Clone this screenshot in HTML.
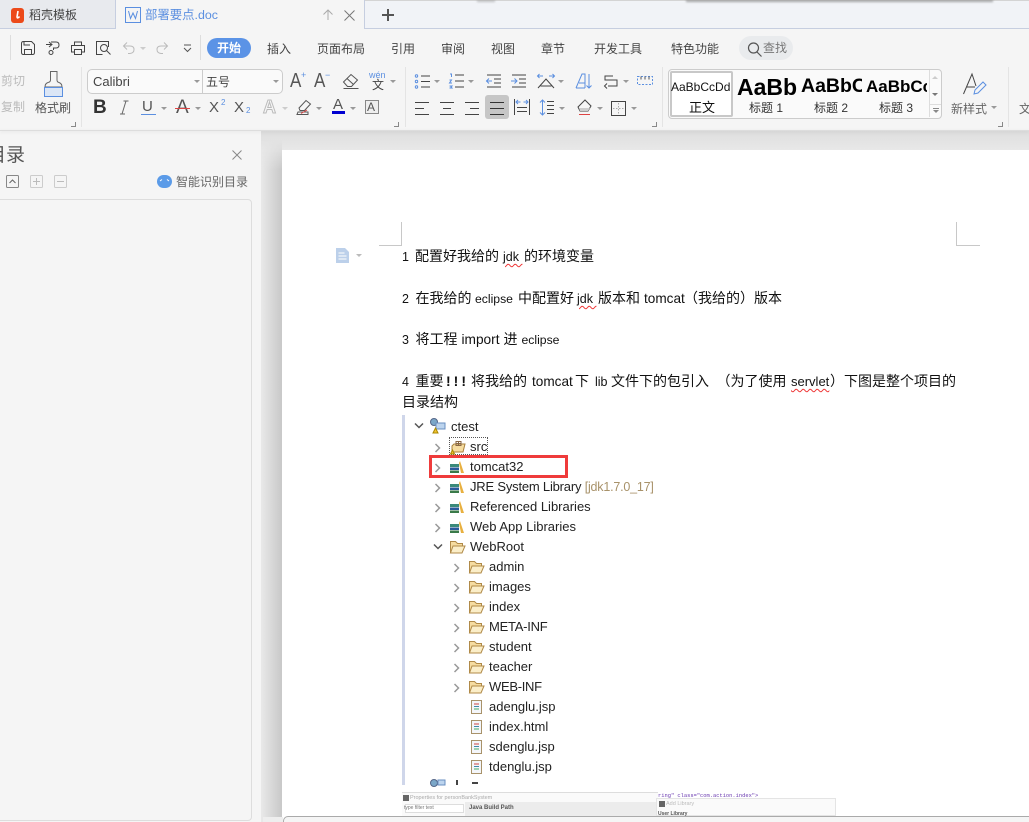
<!DOCTYPE html>
<html><head><meta charset="utf-8"><style>
html,body{margin:0;padding:0;background:#f5f5f5}
#r{position:relative;width:1029px;height:822px;overflow:hidden;background:#f5f5f5;font-family:"Liberation Sans","Noto Sans CJK SC",sans-serif;color:#444}
.a,.t{position:absolute}
.t{white-space:nowrap;font-size:12px;line-height:16px}
.g{line-height:1;color:#555}
.d{font-size:14px;line-height:18px;color:#111}
.d i{font-style:normal;font-size:12.5px}
.e{font-size:13px;line-height:16px;color:#222}
.w{text-decoration:underline wavy #e33 1px;text-underline-offset:2px}
svg{position:absolute;overflow:visible;fill:none;stroke:#444;stroke-width:1}
.b{stroke:#5b8fe0}
.car{position:absolute;width:0;height:0;border-left:3px solid transparent;border-right:3px solid transparent;border-top:3px solid #999}
</style></head><body><div id="r">

<!-- tab bar -->
<div class="a" style="left:0;top:0;width:1029px;height:28px;background:#f1f3f7;border-bottom:1px solid #c6cee0"></div>
<div class="a" style="left:0;top:0;width:115px;height:28px;background:#e8eaee;border-right:1px solid #c6cee0"></div>
<div class="a" style="left:116px;top:0;width:248px;height:29px;background:#f5f5f5;border-right:1px solid #c6cee0"></div>
<div class="a" style="left:365px;top:0;width:664px;height:1px;background:#d4d4d4"></div>
<div class="a" style="left:477px;top:0;width:18px;height:2px;background:#888;opacity:.5;filter:blur(1px)"></div>
<div class="a" style="left:686px;top:0;width:307px;height:2px;background:#666;opacity:.6;filter:blur(1px)"></div>
<div class="a" style="left:11px;top:8px;width:13px;height:15px;border-radius:3px;background:#ec4a1a"></div>
<svg style="left:11px;top:8px" width="13" height="15"><path d="M7 3 L6 9 Q6.500 11 8.500 8.500" stroke="#fff" stroke-width="1.600"/></svg>
<div class="t" style="left:29px;top:7px;font-size:12px;color:#444">稻壳模板</div>
<svg style="left:125px;top:7px" width="16" height="16"><rect x=".5" y=".5" width="15" height="15" stroke="#5b8fe0"/><path d="M3.500 4 L5.500 11.500 L8 6 L10.500 11.500 L12.500 4" class="b"/></svg>
<div class="t" style="left:145px;top:7px;font-size:12.400px;color:#5b8fe0">部署要点.doc</div>
<svg style="left:322px;top:9px" width="12" height="12"><path d="M6 11V1M1.500 5.500 6 1l4.500 4.500" stroke="#aaa"/></svg>
<svg style="left:344px;top:10px" width="11" height="11"><path d="M.5.500l10 10M10.500.500l-10 10" stroke="#777"/></svg>
<svg style="left:382px;top:9px" width="12" height="12"><path d="M6 0v12M0 6h12" stroke="#555" stroke-width="2"/></svg>

<!-- quick access -->
<div class="a" style="left:10px;top:35px;width:1px;height:25px;background:#ddd"></div>
<svg style="left:21px;top:41px" width="14" height="14"><path d="M.5 2.500q0-2 2-2h8l3 3v8q0 2-2 2h-9q-2 0-2-2zM3.500 13V8.500h7V13M3 .5V4h6" /></svg>
<svg style="left:46px;top:41px" width="14" height="14"><path d="M5 1h5q3 0 3 3t-3 3H7.500v2M0 3.500h6M3 1l3 2.500L3 6"/><circle cx="5" cy="11.500" r="2"/></svg>
<svg style="left:71px;top:41px" width="14" height="14"><path d="M3.500 4V1h7v3M3.500 11H.5V4.500h13V11h-3M3.500 8.500h7v5h-7z"/></svg>
<svg style="left:96px;top:41px" width="15" height="14"><path d="M12.500 6V.5H.5v13h6"/><circle cx="8" cy="7" r="3.500"/><path d="M10.500 9.500l4 4"/></svg>
<svg style="left:123px;top:42px" width="12" height="12"><path d="M4 .5 .5 4 4 7.500M.5 4H7q4 0 4 3.500T7 11.500H5" stroke="#bbb"/></svg>
<div class="car" style="left:140px;top:47px;border-top-color:#ccc"></div>
<svg style="left:156px;top:42px" width="12" height="12"><path d="M8 .5 11.500 4 8 7.500M11.500 4H5Q1 4 1 7.500T5 11.500h2" stroke="#bbb"/></svg>
<svg style="left:183px;top:44px" width="9" height="9"><path d="M1 1h7M1 4l3.500 3.500L8 4" stroke="#555"/></svg>
<div class="a" style="left:200px;top:35px;width:1px;height:25px;background:#ddd"></div>

<div class="a" style="left:207px;top:38px;width:44px;height:20px;border-radius:10px;background:#5b93e6"></div>
<div class="t" style="left:217px;top:40px;color:#fff;font-weight:700">开始</div>
<div class="t" style="left:267px;top:41px">插入</div>
<div class="t" style="left:317px;top:41px">页面布局</div>
<div class="t" style="left:391px;top:41px">引用</div>
<div class="t" style="left:441px;top:41px">审阅</div>
<div class="t" style="left:491px;top:41px">视图</div>
<div class="t" style="left:541px;top:41px">章节</div>
<div class="t" style="left:594px;top:41px">开发工具</div>
<div class="t" style="left:671px;top:41px">特色功能</div>
<div class="a" style="left:739px;top:36px;width:54px;height:24px;border-radius:12px;background:#e9ebed"></div>
<svg style="left:747px;top:42px" width="16" height="15"><circle cx="6.500" cy="6" r="5" stroke="#555" stroke-width="1.200"/><path d="M10 10l4.500 4.500" stroke="#555" stroke-width="1.200"/></svg>
<div class="t" style="left:763px;top:40px;color:#777">查找</div>

<!-- clipboard -->
<div class="t" style="left:1px;top:73px;color:#bbb">剪切</div>
<div class="t" style="left:1px;top:99px;color:#bbb">复制</div>
<svg style="left:44px;top:71px" width="19" height="26"><path d="M1 17h17v8H1z" fill="#dbe6f6" stroke="none"/><path d="M6.500 .5H13V9Q13 11 15 11.500Q18 12.500 18 16H1Q1 12.500 4 11.500Q6.500 11 6.500 9Z" stroke="#666"/><path d="M.5 16v9.500h18V16" stroke="#5b8fe0"/><path d="M1 16.500h17" class="b"/></svg>
<div class="t" style="left:35px;top:100px;color:#555">格式刷</div>
<div class="a" style="left:81px;top:67px;width:1px;height:60px;background:#e4e4e4"></div>

<!-- font row -->
<div class="a" style="left:87px;top:69px;width:194px;height:23px;border:1px solid #ccc;border-radius:5px;background:#fafafa"></div>
<div class="a" style="left:202px;top:70px;width:1px;height:23px;background:#ccc"></div>
<div class="t" style="left:93px;top:74px;font-size:13px;color:#444">Calibri</div>
<div class="t" style="left:206px;top:74px;font-size:12px;color:#444">五号</div>
<div class="car" style="left:194px;top:80px"></div><div class="car" style="left:273px;top:80px"></div>
<div class="t g" style="left:290px;top:71px;font-size:20px;transform:scaleX(.85);transform-origin:left">A</div><div class="t" style="left:301px;top:70px;font-size:9px;color:#5b8fe0;line-height:10px">+</div>
<div class="t g" style="left:314px;top:71px;font-size:20px;transform:scaleX(.85);transform-origin:left">A</div><div class="t" style="left:325px;top:70px;font-size:9px;color:#5b8fe0;line-height:10px">−</div>
<svg style="left:343px;top:74px" width="16" height="15"><path d="M.5 8 8 .5l6.500 5.500-6 6.500H4.500zM4 4.500l6.500 6M.5 14.500h15" stroke="#555"/></svg>
<div class="t" style="left:369px;top:70px;font-size:9px;line-height:11px;color:#5b8fe0">wén</div>
<div class="t" style="left:372px;top:80px;font-size:12px;line-height:11px">文</div>
<div class="car" style="left:390px;top:80px"></div>

<!-- format row -->
<div class="t g" style="left:93px;top:98px;font-size:19px;font-weight:700;color:#333">B</div>
<svg style="left:119px;top:100px" width="10" height="15"><path d="M4.500 1H9.500M7 1 3 14M1 14H6" stroke="#666"/></svg>
<div class="t g" style="left:142px;top:99px;font-size:15px">U</div><div class="a" style="left:141px;top:114px;width:15px;height:1px;background:#5b8fe0"></div>
<div class="car" style="left:161px;top:107px"></div>
<div class="t g" style="left:176px;top:98px;font-size:19px">A</div><div class="a" style="left:175px;top:108px;width:15px;height:1px;background:#d44"></div>
<div class="car" style="left:195px;top:107px"></div>
<div class="t g" style="left:209px;top:100px;font-size:15px">X</div><div class="t" style="left:221px;top:98px;font-size:8px;line-height:10px;color:#5b8fe0">2</div>
<div class="t g" style="left:234px;top:100px;font-size:15px">X</div><div class="t" style="left:246px;top:106px;font-size:8px;line-height:10px;color:#5b8fe0">2</div>
<div class="t g" style="left:263px;top:98px;font-size:18px;color:#f5f5f5;-webkit-text-stroke:1px #bbb;font-weight:700">A</div>
<div class="car" style="left:282px;top:107px;border-top-color:#ccc"></div>
<svg style="left:296px;top:99px" width="17" height="16"><path d="M3 9 10 1.500l4.500 3.500-6 6.500H4zM1 15.500h11V13H2z" stroke="#555"/><path d="M5 14.500l6-3.500" stroke="#d44"/></svg>
<div class="car" style="left:316px;top:107px"></div>
<div class="t g" style="left:333px;top:97px;font-size:15px">A</div><div class="a" style="left:332px;top:111px;width:13px;height:3px;background:#0000d0"></div>
<div class="car" style="left:350px;top:107px"></div>
<div class="a" style="left:365px;top:100px;width:12px;height:12px;border:1px solid #888;background:#eee"></div>
<div class="t g" style="left:367px;top:101px;font-size:12px">A</div>
<div class="a" style="left:405px;top:67px;width:1px;height:60px;background:#e4e4e4"></div>

<!-- paragraph row 1 -->
<svg style="left:415px;top:74px" width="20" height="15"><g stroke="#5b8fe0"><circle cx="1.500" cy="2" r="1.200"/><circle cx="1.500" cy="7.500" r="1.200"/><circle cx="1.500" cy="13" r="1.200"/></g><path d="M6 2h9M6 7.500h9M6 13h9"/></svg>
<div class="car" style="left:434px;top:80px"></div>
<svg style="left:449px;top:73px" width="20" height="16"><path d="M6 2h9M6 8h9M6 14h9"/><path d="M1 1h1.500v3M.5 7h2L.5 10h2.500M.5 13h2.500l-1 1 1 1H.5" class="b"/></svg>
<div class="car" style="left:468px;top:80px"></div>
<svg style="left:486px;top:74px" width="16" height="14"><path d="M1 1h14M8 5h7M8 9h7M1 13h14"/><path d="M6 7H0M3 4.500 .5 7 3 9.500" class="b"/></svg>
<svg style="left:511px;top:74px" width="16" height="14"><path d="M1 1h14M8 5h7M8 9h7M1 13h14"/><path d="M0 7h6M3.500 4.500 6 7 3.500 9.500" class="b"/></svg>
<svg style="left:537px;top:73px" width="18" height="16"><path d="M1 15 9 6l8 9M3.500 13h11"/><path d="M1 3h5M2.500 1 .5 3l2 2M17 3h-5M15.500 1l2 2-2 2" class="b"/></svg>
<div class="car" style="left:558px;top:80px"></div>
<svg style="left:575px;top:73px" width="18" height="16"><path d="M1 15 7 1h3v14M1 15h9M4 10h6" class="b"/><path d="M14 1v14M11.500 12.500 14 15l2.500-2.500" class="b"/></svg>
<svg style="left:604px;top:75px" width="15" height="12"><path d="M9 1H1v4h12v6H4M3 8.500.5 11 3 13.500"/></svg>
<div class="car" style="left:623px;top:80px"></div>
<svg style="left:637px;top:76px" width="16" height="10"><path d="M.5.500h15v8h-15z" stroke="#5b8fe0" stroke-dasharray="2 1.500"/><path d="M4 .5v3M8 .5v3M12 .5v3" stroke="#555"/></svg>

<!-- paragraph row 2 -->
<svg style="left:415px;top:102px" width="14" height="13"><path d="M0 .5h14M0 6.500h9M0 12.500h14"/></svg>
<svg style="left:440px;top:102px" width="14" height="13"><path d="M0 .5h14M3 6.500h8M0 12.500h14"/></svg>
<svg style="left:465px;top:102px" width="14" height="13"><path d="M0 .5h14M5 6.500h9M0 12.500h14"/></svg>
<div class="a" style="left:485px;top:95px;width:24px;height:24px;background:#c6c6c6;border-radius:3px"></div>
<svg style="left:490px;top:102px" width="14" height="13"><path d="M0 .5h14M0 6.500h14M0 12.500h14" stroke="#333"/></svg>
<svg style="left:514px;top:99px" width="16" height="16"><path d="M.5 0v16M15.500 0v16M3 8.500h10M3 12.500h10" /><path d="M2.500 3h4M4 1 2 3l2 2M13.500 3h-4M12 1l2 2-2 2" class="b"/></svg>
<svg style="left:539px;top:100px" width="16" height="15"><path d="M3.500 0v15M1 2.500 3.500 0 6 2.500M1 12.500 3.500 15 6 12.500" class="b"/><path d="M8 1.500h7M8 5.500h7M8 9.500h7M8 13.500h7"/></svg>
<div class="car" style="left:559px;top:107px"></div>
<svg style="left:576px;top:99px" width="17" height="16"><path d="M2 8 9 1l6 6-3 5H4z"/><path d="M3 9h11l-2 3H4z" fill="#ccc" stroke="none"/><path d="M3 15.500h11" stroke="#d44"/></svg>
<div class="car" style="left:597px;top:107px"></div>
<svg style="left:611px;top:101px" width="15" height="15"><rect x=".5" y=".5" width="14" height="14"/><path d="M7.500 2v11M2 7.500h11" stroke="#aaa" stroke-dasharray="1.500 1.500"/></svg>
<div class="car" style="left:631px;top:107px"></div>
<div class="a" style="left:662px;top:67px;width:1px;height:60px;background:#e4e4e4"></div>

<!-- styles gallery -->
<div class="a" style="left:668px;top:69px;width:272px;height:48px;border:1px solid #ccc;border-radius:4px;background:#fafafa"></div>
<div class="a" style="left:670px;top:71px;width:63px;height:46px;border:2px solid #c8c8c8;border-radius:2px;background:#fff;box-sizing:border-box"></div>
<div class="t" style="left:671px;top:79px;font-size:12px;color:#111">AaBbCcDd</div>
<div class="t" style="left:689px;top:100px;font-size:13px;color:#111">正文</div>
<div class="a" style="left:737px;top:70px;width:60px;height:30px;overflow:hidden"><div class="t" style="left:0;top:4px;font-size:23px;line-height:26px;font-weight:700;color:#000">AaBb</div></div>
<div class="t" style="left:749px;top:100px;color:#333">标题 1</div>
<div class="a" style="left:801px;top:70px;width:61px;height:30px;overflow:hidden"><div class="t" style="left:0;top:4px;font-size:19.500px;line-height:24px;font-weight:700;color:#000">AaBbC</div></div>
<div class="t" style="left:814px;top:100px;color:#333">标题 2</div>
<div class="a" style="left:866px;top:70px;width:61px;height:30px;overflow:hidden"><div class="t" style="left:0;top:6px;font-size:17px;line-height:22px;font-weight:700;color:#000">AaBbCc</div></div>
<div class="t" style="left:879px;top:100px;color:#333">标题 3</div>
<div class="a" style="left:929px;top:70px;width:1px;height:47px;background:#ddd"></div>
<div class="car" style="left:932px;top:76px;border-top:0;border-bottom:3px solid #ccc"></div>
<div class="car" style="left:932px;top:93px;border-top-color:#777"></div>
<div class="a" style="left:930px;top:104px;width:11px;height:1px;background:#ddd"></div>
<div class="a" style="left:933px;top:108px;width:6px;height:1px;background:#888"></div>
<div class="car" style="left:933px;top:110px;border-top-color:#888"></div>
<svg style="left:963px;top:73px" width="24" height="24"><path d="M.5 21 9 1l4 12M4 14h8"/><path d="M11 21l1-4 8-8 3 3-8 8z" class="b"/></svg>
<div class="t" style="left:951px;top:101px;color:#666">新样式</div>
<div class="car" style="left:991px;top:106px"></div>
<div class="a" style="left:1008px;top:67px;width:1px;height:60px;background:#e4e4e4"></div>
<div class="t" style="left:1019px;top:101px;color:#666">文</div>
<svg style="left:71px;top:122px" width="5" height="5"><path d="M4.500 0v4.500H0" stroke="#888"/></svg>
<svg style="left:394px;top:122px" width="5" height="5"><path d="M4.500 0v4.500H0" stroke="#888"/></svg>
<svg style="left:652px;top:122px" width="5" height="5"><path d="M4.500 0v4.500H0" stroke="#888"/></svg>
<svg style="left:998px;top:122px" width="5" height="5"><path d="M4.500 0v4.500H0" stroke="#888"/></svg>

<!-- left panel -->
<div class="t" style="left:-13px;top:145px;font-size:19px;line-height:22px;color:#555">目录</div>
<svg style="left:232px;top:150px" width="10" height="10"><path d="M.5.500l9 9M9.500.500l-9 9" stroke="#888"/></svg>
<svg style="left:6px;top:175px" width="13" height="13"><rect x=".5" y=".5" width="12" height="12" rx="1" stroke="#888"/><path d="M3.500 8 6.500 5l3 3" stroke="#666"/></svg>
<svg style="left:30px;top:175px" width="13" height="13"><rect x=".5" y=".5" width="12" height="12" rx="1" stroke="#ccc"/><path d="M3 6.500h7M6.500 3v7" stroke="#bbb"/></svg>
<svg style="left:54px;top:175px" width="13" height="13"><rect x=".5" y=".5" width="12" height="12" rx="1" stroke="#ccc"/><path d="M3 6.500h7" stroke="#bbb"/></svg>
<div class="a" style="left:157px;top:175px;width:15px;height:13px;border-radius:7px;background:#5b9be8"></div>
<svg style="left:157px;top:175px" width="15" height="13"><path d="M3 6l2-1.500M12 6l-2-1.500" stroke="#fff"/></svg>
<div class="t" style="left:176px;top:174px;color:#666">智能识别目录</div>
<div class="a" style="left:-6px;top:199px;width:256px;height:620px;border:1px solid #ddd;border-radius:4px;background:#f5f5f5"></div>

<!-- workspace -->
<div class="a" style="left:261px;top:131px;width:768px;height:691px;background:linear-gradient(180deg,#dedede 0,#e8e8e8 19px)"></div>
<div class="a" style="left:261px;top:140px;width:21px;height:682px;background:linear-gradient(90deg,#e9e9e9,#c8c8c8);-webkit-mask-image:linear-gradient(180deg,transparent 0,#000 30px);mask-image:linear-gradient(180deg,transparent 0,#000 30px)"></div>
<div class="a" style="left:282px;top:150px;width:747px;height:672px;background:#fff"></div>
<div class="a" style="left:0;top:130px;width:1029px;height:1px;background:#ddd;box-shadow:0 1px 3px rgba(0,0,0,.12)"></div>

<!-- crop marks -->
<div class="a" style="left:379px;top:222px;width:22px;height:23px;border-right:1px solid #c8c8c8;border-bottom:1px solid #c8c8c8"></div>
<div class="a" style="left:956px;top:222px;width:23px;height:23px;border-left:1px solid #c8c8c8;border-bottom:1px solid #c8c8c8"></div>
<svg style="left:336px;top:248px" width="14" height="15"><path d="M0 0h9l4 4v11H0z" fill="#bcd0ea" stroke="none"/><path d="M2.500 5h6M2.500 8h8M2.500 11h8" stroke="#fff"/></svg>
<div class="car" style="left:356px;top:254px;border-top-color:#bbb"></div>

<!-- document text -->
<div class="t d" style="left:402px;top:247px"><i>1</i></div>
<div class="t d" style="left:415px;top:247px">配置好我给的</div>
<div class="t d" style="left:503px;top:247px"><i class="w">jdk&nbsp;</i></div>
<div class="t d" style="left:524px;top:247px">的环境变量</div>

<div class="t d" style="left:402px;top:289px"><i>2</i></div>
<div class="t d" style="left:415.500px;top:289px">在我给的</div>
<div class="t d" style="left:475px;top:289px"><i style="font-size:12.200px">eclipse</i></div>
<div class="t d" style="left:518px;top:289px">中配置好</div>
<div class="t d" style="left:577px;top:289px"><i class="w">jdk&nbsp;</i></div>
<div class="t d" style="left:598px;top:289px">版本和</div>
<div class="t d" style="left:644px;top:289px"><i style="font-size:13.600px">tomcat</i></div>
<div class="t d" style="left:684px;top:289px">（我给的）版本</div>

<div class="t d" style="left:402px;top:330px"><i>3</i></div>
<div class="t d" style="left:415.500px;top:330px">将工程</div>
<div class="t d" style="left:461.500px;top:330px"><i style="font-size:13.700px">import</i></div>
<div class="t d" style="left:503.500px;top:330px">进</div>
<div class="t d" style="left:521.500px;top:330px"><i style="font-size:12.200px">eclipse</i></div>

<div class="t d" style="left:402px;top:372px"><i>4</i></div>
<div class="t d" style="left:415.500px;top:372px">重要</div>
<div class="t d" style="left:446px;top:372px"><b style="letter-spacing:3px">!!!</b></div>
<div class="t d" style="left:471px;top:372px">将我给的</div>
<div class="t d" style="left:532px;top:372px"><i style="font-size:13.600px">tomcat</i></div>
<div class="t d" style="left:575px;top:372px">下</div>
<div class="t d" style="left:595px;top:372px"><i>lib</i></div>
<div class="t d" style="left:611px;top:372px">文件下的包引入</div>
<div class="t d" style="left:716.500px;top:372px">（为了使用</div>
<div class="t d" style="left:791px;top:372px"><i class="w" style="font-size:13px">servlet</i></div>
<div class="t d" style="left:830px;top:372px">）下图是整个项目的</div>
<div class="t d" style="left:402px;top:393px">目录结构</div>

<!-- embedded tree image -->
<div class="a" style="left:402px;top:415px;width:3px;height:370px;background:#cfd6ea"></div>
<svg style="left:414px;top:422px" width="10" height="8"><path d="M1 1.500 5 5.500 9 1.500" stroke="#555" stroke-width="1.500"/></svg>
<svg style="left:430px;top:418px" width="16" height="16"><circle cx="4" cy="4" r="3.500" fill="#7ba7c8" stroke="#568"/><path d="M6 5h9v6H6z" fill="#bcd4ee" stroke="#6a8fc0"/><path d="M3 15l2.500-5 2.500 5z" fill="#f4c430" stroke="#a80"/></svg>
<div class="t e" style="left:451px;top:419px">ctest</div>

<div class="a" style="left:449px;top:437px;width:39px;height:18px;border:1px dotted #555;box-sizing:border-box"></div>
<svg style="left:434px;top:443px" width="7" height="10"><path d="M1.500 1 5.500 5 1.500 9" stroke="#999" stroke-width="1.500"/></svg>
<svg style="left:450px;top:440px" width="16" height="15"><path d="M2 6 4 4h11l-2 8H2z" fill="#f6dca0" stroke="#a8803c"/><path d="M6 1.500h5v4H6zM8.500 1.500v4M6 3.500h5" stroke="#864"/><path d="M.5 14l2-4 2 4z" fill="#f4c430" stroke="#a80"/></svg>
<div class="t e" style="left:470px;top:439px">src</div>

<div class="a" style="left:429px;top:455px;width:139px;height:23px;border:3px solid #ef3b3b;box-sizing:border-box"></div>
<svg style="left:434px;top:463px" width="7" height="10"><path d="M1.500 1 5.500 5 1.500 9" stroke="#999" stroke-width="1.500"/></svg>
<svg style="left:450px;top:461px" width="15" height="12"><rect x="0" y="3" width="9" height="3" fill="#3a8a7a" stroke="none"/><rect x="0" y="6.500" width="9" height="2.500" fill="#2a5a9a" stroke="none"/><rect x="0" y="9.500" width="9" height="2.500" fill="#3a7a4a" stroke="none"/><path d="M10 0l4 12h-3L9 2z" fill="#e8b040" stroke="none"/></svg>
<div class="t e" style="left:470px;top:459px">tomcat32</div>

<svg style="left:434px;top:483px" width="7" height="10"><path d="M1.500 1 5.500 5 1.500 9" stroke="#999" stroke-width="1.500"/></svg>
<svg style="left:450px;top:481px" width="15" height="12"><rect x="0" y="3" width="9" height="3" fill="#3a8a7a" stroke="none"/><rect x="0" y="6.500" width="9" height="2.500" fill="#2a5a9a" stroke="none"/><rect x="0" y="9.500" width="9" height="2.500" fill="#3a7a4a" stroke="none"/><path d="M10 0l4 12h-3L9 2z" fill="#e8b040" stroke="none"/></svg>
<div class="t e" style="left:470px;top:479px;letter-spacing:-.2px">JRE System Library <span style="color:#a8926a;font-size:12.500px">[jdk1.7.0_17]</span></div>

<svg style="left:434px;top:503px" width="7" height="10"><path d="M1.500 1 5.500 5 1.500 9" stroke="#999" stroke-width="1.500"/></svg>
<svg style="left:450px;top:501px" width="15" height="12"><rect x="0" y="3" width="9" height="3" fill="#3a8a7a" stroke="none"/><rect x="0" y="6.500" width="9" height="2.500" fill="#2a5a9a" stroke="none"/><rect x="0" y="9.500" width="9" height="2.500" fill="#3a7a4a" stroke="none"/><path d="M10 0l4 12h-3L9 2z" fill="#e8b040" stroke="none"/></svg>
<div class="t e" style="left:470px;top:499px">Referenced Libraries</div>

<svg style="left:434px;top:523px" width="7" height="10"><path d="M1.500 1 5.500 5 1.500 9" stroke="#999" stroke-width="1.500"/></svg>
<svg style="left:450px;top:521px" width="15" height="12"><rect x="0" y="3" width="9" height="3" fill="#3a8a7a" stroke="none"/><rect x="0" y="6.500" width="9" height="2.500" fill="#2a5a9a" stroke="none"/><rect x="0" y="9.500" width="9" height="2.500" fill="#3a7a4a" stroke="none"/><path d="M10 0l4 12h-3L9 2z" fill="#e8b040" stroke="none"/></svg>
<div class="t e" style="left:470px;top:519px">Web App Libraries</div>

<svg style="left:433px;top:543px" width="10" height="8"><path d="M1 1.500 5 5.500 9 1.500" stroke="#555" stroke-width="1.500"/></svg>
<svg style="left:450px;top:540px" width="16" height="14"><path d="M.5 13V1.500h5l2 2h5V6" fill="#f6dca0" stroke="#b08a48"/><path d="M.5 13 3 6h12l-3 7z" fill="#fbeec8" stroke="#b08a48"/></svg>
<div class="t e" style="left:470px;top:539px">WebRoot</div>

<svg style="left:453px;top:563px" width="7" height="10"><path d="M1.500 1 5.500 5 1.500 9" stroke="#999" stroke-width="1.500"/></svg>
<svg style="left:469px;top:560px" width="16" height="14"><path d="M.5 13V1.500h5l2 2h5V6" fill="#f6dca0" stroke="#b08a48"/><path d="M.5 13 3 6h12l-3 7z" fill="#fbeec8" stroke="#b08a48"/></svg>
<div class="t e" style="left:489px;top:559px">admin</div>

<svg style="left:453px;top:583px" width="7" height="10"><path d="M1.500 1 5.500 5 1.500 9" stroke="#999" stroke-width="1.500"/></svg>
<svg style="left:469px;top:580px" width="16" height="14"><path d="M.5 13V1.500h5l2 2h5V6" fill="#f6dca0" stroke="#b08a48"/><path d="M.5 13 3 6h12l-3 7z" fill="#fbeec8" stroke="#b08a48"/></svg>
<div class="t e" style="left:489px;top:579px">images</div>

<svg style="left:453px;top:603px" width="7" height="10"><path d="M1.500 1 5.500 5 1.500 9" stroke="#999" stroke-width="1.500"/></svg>
<svg style="left:469px;top:600px" width="16" height="14"><path d="M.5 13V1.500h5l2 2h5V6" fill="#f6dca0" stroke="#b08a48"/><path d="M.5 13 3 6h12l-3 7z" fill="#fbeec8" stroke="#b08a48"/></svg>
<div class="t e" style="left:489px;top:599px">index</div>

<svg style="left:453px;top:623px" width="7" height="10"><path d="M1.500 1 5.500 5 1.500 9" stroke="#999" stroke-width="1.500"/></svg>
<svg style="left:469px;top:620px" width="16" height="14"><path d="M.5 13V1.500h5l2 2h5V6" fill="#f6dca0" stroke="#b08a48"/><path d="M.5 13 3 6h12l-3 7z" fill="#fbeec8" stroke="#b08a48"/></svg>
<div class="t e" style="left:489px;top:619px;letter-spacing:-.25px">META-INF</div>

<svg style="left:453px;top:643px" width="7" height="10"><path d="M1.500 1 5.500 5 1.500 9" stroke="#999" stroke-width="1.500"/></svg>
<svg style="left:469px;top:640px" width="16" height="14"><path d="M.5 13V1.500h5l2 2h5V6" fill="#f6dca0" stroke="#b08a48"/><path d="M.5 13 3 6h12l-3 7z" fill="#fbeec8" stroke="#b08a48"/></svg>
<div class="t e" style="left:489px;top:639px">student</div>

<svg style="left:453px;top:663px" width="7" height="10"><path d="M1.500 1 5.500 5 1.500 9" stroke="#999" stroke-width="1.500"/></svg>
<svg style="left:469px;top:660px" width="16" height="14"><path d="M.5 13V1.500h5l2 2h5V6" fill="#f6dca0" stroke="#b08a48"/><path d="M.5 13 3 6h12l-3 7z" fill="#fbeec8" stroke="#b08a48"/></svg>
<div class="t e" style="left:489px;top:659px">teacher</div>

<svg style="left:453px;top:683px" width="7" height="10"><path d="M1.500 1 5.500 5 1.500 9" stroke="#999" stroke-width="1.500"/></svg>
<svg style="left:469px;top:680px" width="16" height="14"><path d="M.5 13V1.500h5l2 2h5V6" fill="#f6dca0" stroke="#b08a48"/><path d="M.5 13 3 6h12l-3 7z" fill="#fbeec8" stroke="#b08a48"/></svg>
<div class="t e" style="left:489px;top:679px;letter-spacing:-.3px">WEB-INF</div>

<svg style="left:471px;top:700px" width="11" height="14"><path d="M.5.500h10v13H.5z" fill="#f4f6fa" stroke="#a8926a"/><path d="M3 4h5" stroke="#c44"/><path d="M3 6.500h5" stroke="#48a"/><path d="M3 9h5" stroke="#4a6"/></svg>
<div class="t e" style="left:489px;top:699px">adenglu.jsp</div>
<svg style="left:471px;top:720px" width="11" height="14"><path d="M.5.500h10v13H.5z" fill="#f4f6fa" stroke="#a8926a"/><path d="M3 4h5" stroke="#c44"/><path d="M3 6.500h5" stroke="#48a"/><path d="M3 9h5" stroke="#4a6"/></svg>
<div class="t e" style="left:489px;top:719px">index.html</div>
<svg style="left:471px;top:740px" width="11" height="14"><path d="M.5.500h10v13H.5z" fill="#f4f6fa" stroke="#a8926a"/><path d="M3 4h5" stroke="#c44"/><path d="M3 6.500h5" stroke="#48a"/><path d="M3 9h5" stroke="#4a6"/></svg>
<div class="t e" style="left:489px;top:739px">sdenglu.jsp</div>
<svg style="left:471px;top:760px" width="11" height="14"><path d="M.5.500h10v13H.5z" fill="#f4f6fa" stroke="#a8926a"/><path d="M3 4h5" stroke="#c44"/><path d="M3 6.500h5" stroke="#48a"/><path d="M3 9h5" stroke="#4a6"/></svg>
<div class="t e" style="left:489px;top:759px">tdenglu.jsp</div>
<svg style="left:430px;top:779px" width="16" height="6"><circle cx="4" cy="4" r="3.500" fill="#7ba7c8" stroke="#568"/><path d="M8 1h7v5H8z" fill="#bcd4ee" stroke="#6a8fc0"/></svg>
<div class="a" style="left:456px;top:780px;width:2px;height:5px;background:#444"></div>
<div class="a" style="left:472px;top:782px;width:6px;height:2px;background:#444"></div>

<!-- second image fragments -->
<div class="a" style="left:402px;top:792px;width:256px;height:24px;background:#fafafa;border-top:1px solid #ddd;box-sizing:border-box"></div>
<div class="a" style="left:403px;top:795px;width:6px;height:6px;background:#666"></div>
<div class="t" style="left:410px;top:793px;font-size:5.500px;line-height:10px;color:#aaa">Properties for personBankSystem</div>
<div class="a" style="left:405px;top:804px;width:57px;height:7px;border:1px solid #ddd;background:#fff"></div>
<div class="t" style="left:404px;top:804px;font-size:5px;line-height:8px;color:#777">type filter text</div>
<div class="a" style="left:465px;top:802px;width:193px;height:14px;background:#ececec"></div>
<div class="t" style="left:469px;top:804px;font-size:6px;line-height:9px;font-weight:700;color:#555">Java Build Path</div>
<div class="t" style="left:658px;top:791px;font-size:5.400px;line-height:10px;color:#6a3ab0;font-family:'Liberation Mono',monospace">ring" class="com.action.index"&gt;</div>
<div class="a" style="left:656px;top:798px;width:180px;height:18px;background:#fafafa;border:1px solid #e4e4e4;box-sizing:border-box"></div>
<div class="a" style="left:659px;top:801px;width:6px;height:6px;background:#666"></div>
<div class="t" style="left:666px;top:799px;font-size:5.500px;line-height:10px;color:#bbb">Add Library</div>
<div class="t" style="left:658px;top:811px;font-size:5px;line-height:6px;font-weight:700;color:#555">User Library</div>

<!-- bottom bar -->
<div class="a" style="left:263px;top:817px;width:20px;height:5px;background:#eee"></div>
<div class="a" style="left:283px;top:816px;width:760px;height:10px;background:#f5f5f5;border:1px solid #aaa;border-radius:5px 0 0 0;box-sizing:border-box"></div>
</div></body></html>
